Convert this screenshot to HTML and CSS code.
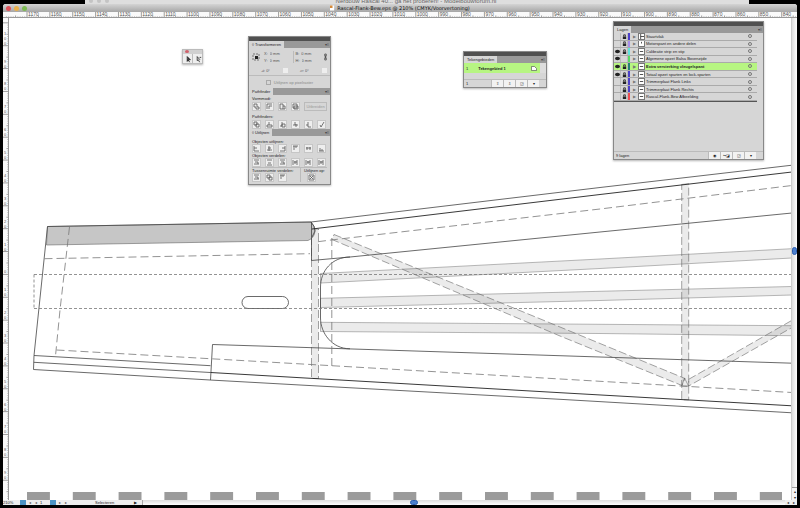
FILE: index.html
```html
<!DOCTYPE html>
<html lang="nl">
<head>
<meta charset="utf-8">
<title>Rascal-Flank-Bew.eps</title>
<link rel="stylesheet" href="styles.css">
</head>
<body>
<div class="browser"><i></i><i></i><i></i><span>Nerdouw Rascal 40... ga het proberen! - Modelbouwforum.nl</span></div>
<main class="window">
  <header class="titlebar">
    <div class="lights"><button class="red" aria-label="Sluit"></button><button class="amber" aria-label="Minimaliseer"></button><button class="green" aria-label="Vergroot"></button></div>
    <h1><svg viewBox="0 0 6 6"><path d="M0 0h5v6H0z" fill="#fff"/><path d="M0 0h3v3H0z" fill="#d58a3a"/></svg>Rascal-Flank-Bew.eps @ 210% (CMYK/Voorvertoning)</h1>
  </header>
  <svg class="ruler-top" id="rulerTop" viewBox="3 12 794 6" preserveAspectRatio="xMinYMin slice"></svg>
  <div class="workspace">
    <svg class="ruler-left" id="rulerLeft" viewBox="3 18 6 482" preserveAspectRatio="xMinYMin slice"></svg>
    <svg class="canvas" viewBox="9 18 782 482" preserveAspectRatio="xMinYMin slice">
      <g class="spar">
        <path d="M320.5 273.5L600 259 792 248.7V258L600 268.5 320.5 283z"/>
        <path d="M320.5 298.3L600 291.3 792 286.5V295L600 300.5 320.5 307.5z"/>
        <path d="M320.5 322.3L600 324.3 792 325.7V335.7L600 333.5 320.5 331.5z"/>
      </g>
      <g class="spar dashed">
        <path d="M311.5 229H318.5V378.5H311.5z"/>
        <path d="M681.7 184.5L688.7 183.7V399.8H681.7z"/>
        <path d="M334 234.5L560 327 685 378.5 682 385.5 560 336 332 239.5z"/>
        <path d="M688.7 379.3L792 320.3V327.5L688.7 386z"/>
      </g>
      <path class="hair" d="M681.7 386L684.5 378 688.5 386z"/>
      <path class="block" d="M47.5 226.5L311 222Q315 226 315 231 314.5 238 308 240.5L46.5 245z"/>
      <g class="line">
        <path d="M311 222Q315 226 315 231L312 237M311.5 222V260.5"/>
        <path d="M47.5 226.5L34 355.5 33.5 369.5 210 380 300 385 560 399.3 792 412.8"/>
        <path d="M34 355.5L210.5 365.7M33.8 362.3L210.5 372.5M210.5 380L212.5 344.5 300 347.3 600 357 792 363.2"/>
        <path d="M47.5 226.5L311 222 600 187.5 792 165.2"/>
        <path class="dark" d="M312 229L600 194.5 792 172M210.5 372.5L312 378.4 560 392.7 792 405.8"/>
        <path d="M311.5 260.5L350 257 600 232 792 213"/>
        <path d="M350 257C332 257 320.5 271 320.5 287V318C320.5 333 332 348.8 350 348.8"/>
        <rect x="242" y="296.5" width="46.5" height="12" rx="6"/>
      </g>
      <path class="dash" d="M44.5 258.7L310 253.7M318 241.7L331 240 600 209 792 185.5M69.5 227L60 310 55.5 356M56.5 350L210 358.7 311 364.5 600 381.3 792 392.5M331.8 238V366"/>
      <path class="dots" d="M34 274.5H792M34 308.5H792M34 274.5V308.5"/>
      <path class="blocks" d="M27 496H782"/>
    </svg>
    <div class="vscroll"><span class="track"></span><span class="thumb"></span><button aria-label="Omhoog">▴</button><button aria-label="Omlaag">▾</button></div>
  </div>
  <footer class="status">
    <span class="zoom">210%</span>
    <span class="nav"><b></b><button aria-label="Eerste">◂</button><button aria-label="Vorige">◂</button><span>1</span></span>
    <span class="nav next"><b></b><button aria-label="Volgende">▸</button><button aria-label="Laatste">▸</button></span>
    <span class="tool">Selecteren</span><span class="play">▶</span>
    <span class="hscroll"><span class="thumb"></span></span>
    <button aria-label="Links">◂</button><button aria-label="Rechts">▸</button>
  </footer>
</main>

<section class="palette tools">
  <div class="mini"><i></i></div>
  <div class="pair"><button aria-label="Selectie"><svg viewBox="0 0 10 10"><path d="M4 2v6l1.500-1.500L7 9M4 2l4 4H5" fill="#222" stroke="#222"/></svg></button><button aria-label="Direct selecteren"><svg viewBox="0 0 10 10"><path d="M4 2v5l1.500-1L7 9M4 2l3.500 4M7 3h2" fill="none" stroke="#222"/></svg></button></div>
</section>

<section class="palette transform">
  <div class="bar"></div>
  <div class="tabs"><button>◊ Transformeren</button></div>
  <div class="body fields">
    <svg class="anchor" viewBox="0 0 8 8"><path d="M1 1h6v6H1z" fill="none" stroke="#777" stroke-dasharray="2 1"/><path d="M3 3h3v3H3z" fill="#222"/></svg>
    <div class="col"><label>X: <input value="0 mm"></label><label>Y: <input value="0 mm"></label></div>
    <div class="col second"><label>B: <input value="0 mm"></label><label>H: <input value="0 mm"></label></div>
    <svg class="chain" viewBox="0 0 4 8"><path d="M1 0h2v3H1zM1 5h2v3H1zM2 2v4" fill="none" stroke="#444"/></svg>
  </div>
  <div class="body angles"><label>⊿: <select><option>0°</option></select></label><label>▱: <select><option>0°</option></select></label></div>
  <div class="body check"><label><input type="checkbox"> Uitlijnen op pixelraster</label></div>
  <div class="tabs"><button>Pathfinder</button></div>
  <div class="body group path">
    <p>Vormmodi:</p>
    <div class="icons" data-icons="0 1 2 3"><button class="expand">Uitbreiden</button></div>
    <p>Pathfinders:</p>
    <div class="icons" data-icons="4 5 6 7 8 9"></div>
  </div>
  <div class="tabs"><button>◊ Uitlijnen</button></div>
  <div class="body group align">
    <p>Objecten uitlijnen:</p>
    <div class="icons" data-icons="10 11 12 13 14 15"></div>
    <p>Objecten verdelen:</p>
    <div class="icons" data-icons="16 17 16 18 18 18"></div>
    <div class="split"><div><p>Tussenruimte verdelen:</p><div class="icons" data-icons="16 4 13"></div></div><div class="to"><p>Uitlijnen op:</p><div class="icons" data-icons="19"></div></div></div>
  </div>
</section>

<section class="palette artboards">
  <div class="bar"></div>
  <div class="tabs"><button>Tekengebieden</button></div>
  <div class="board"><span>1</span><b>Tekengebied 1</b><svg viewBox="0 0 6 5"><path d="M.5.5h3l2 2v2h-5z" fill="#fff" stroke="#444" stroke-width=".6"/></svg></div>
  <div class="gap"></div>
  <div class="foot"><span>1</span><button>⇧</button><button>⇩</button><button>◲</button><button>▾</button></div>
</section>

<section class="palette layers">
  <div class="bar"></div>
  <div class="tabs"><button>Lagen</button></div>
  <ul id="layers"></ul>
  <div class="rest"></div>
  <div class="foot"><span>9 lagen</span><button>◉</button><button>↪◪</button><button>◲</button><button>▾</button></div>
</section>
<script src="app.js"></script>
</body>
</html>
```
FILE: styles.css
```css
* { box-sizing: border-box; }
body { margin: 0; height: 100vh; background: #000; overflow: hidden; display: flex; flex-direction: column; font: 4px/5px "Liberation Sans", sans-serif; color: #222; position: relative; }
button, input, select { font: inherit; color: inherit; margin: 0; padding: 0; border: 0; background: none; border-radius: 0; appearance: none; }
button { display: flex; align-items: center; justify-content: center; }
p, h1, ul { margin: 0; padding: 0; font-weight: normal; list-style: none; }
svg { display: block; }

.browser { height: 4px; flex: none; margin: 0 51px 0 85px; background: #dedede; display: flex; gap: 4px; padding-left: 4px; overflow: hidden; position: relative; }
.browser i { width: 4px; height: 4px; margin-top: -1px; border-radius: 50%; background: #c4c4c4; }
.browser span { flex: 1; text-align: center; margin: -2px 30px 0 0; font: 6px/6px "Liberation Sans", sans-serif; color: #666; }
.window { flex: 1; min-height: 0; margin: 0 3px 3px; background: #fff; border-radius: 3px 3px 0 0; overflow: hidden; display: flex; flex-direction: column; }
.titlebar { height: 8px; flex: none; background: linear-gradient(#d4d4d4, #a6a6a6); display: flex; align-items: center; padding-left: 3px; }
.lights { display: flex; gap: 3px; }
.lights button { width: 5px; height: 5px; border-radius: 50%; }
.red { background: #e0525a; }
.amber { background: #e9b04a; }
.green { background: #7cbb52; }
.titlebar h1 { flex: 1; display: flex; justify-content: center; gap: 2px; font: 5px/6px "DejaVu Sans", sans-serif; color: #111; padding-right: 24px; }
.titlebar h1 svg { width: 5px; height: 6px; }
.ruler-top { width: 100%; height: 6px; flex: none; background: #fafafa; border-bottom: 1px solid #999; }
.workspace { flex: 1; min-height: 0; display: flex; }
.ruler-left { width: 6px; height: 100%; flex: none; background: #fafafa; border-right: 1px solid #999; }
.tick { stroke: #777; stroke-width: 0.7; fill: none; }
.num { font: 5px "Liberation Sans", sans-serif; fill: #555; }
.side { font-size: 4px; }
.canvas { flex: 1; min-width: 0; height: 100%; }
.spar path { fill: rgba(0, 0, 0, 0.08); stroke: #888; stroke-width: 0.6; }
.dashed path { stroke: #666; stroke-dasharray: 8 3; }
.hair { fill: none; stroke: #555; stroke-width: 0.5; }
.block { fill: #c6c6c6; stroke: #666; stroke-width: 0.6; }
.line { fill: none; stroke: #444; stroke-width: 0.8; }
.dark { stroke: #222; stroke-width: 0.9; }
.dash { fill: none; stroke: #777; stroke-width: 0.8; stroke-dasharray: 8 4; }
.dots { fill: none; stroke: #777; stroke-width: 0.8; stroke-dasharray: 3 2; }
.blocks { stroke: #9b9b9b; stroke-width: 8; stroke-dasharray: 22.9 22.9; }
.vscroll { width: 6px; flex: none; background: #f4f4f4; border-left: 1px solid #ccc; display: flex; flex-direction: column; position: relative; }
.track { flex: 1; background: linear-gradient(90deg, #ddd, #fff); border-bottom: 1px solid #999; }
.vscroll button { height: 6px; }
.thumb { background: #4c80cf; border: 1px solid #2b5eb0; border-radius: 3px; }
.vscroll .thumb { position: absolute; left: 0; top: 47.5%; width: 5px; height: 8px; }
.status { height: 5px; flex: none; background: #eee; display: flex; align-items: center; }
.zoom { width: 17px; }
.nav { display: flex; align-items: center; width: 30px; gap: 2px; }
.nav b { width: 6px; height: 5px; background: #4b93c4; }
.nav button { width: 4px; color: #555; }
.tool { margin-left: 15px; }
.play { margin-left: 20px; }
.hscroll { flex: 1; height: 5px; margin-left: 5px; border-left: 1px solid #aaa; background: linear-gradient(#ddd, #fff); position: relative; }
.hscroll .thumb { position: absolute; left: 41.5%; top: 0; width: 8px; height: 5px; }
.status > button { width: 6px; }

.palette { position: absolute; background: #d6d6d6; border: 1px solid #888; box-shadow: 0 1px 2px rgba(0, 0, 0, 0.3); display: flex; flex-direction: column; }
.bar { height: 4px; flex: none; background: #505050; }
.tabs { height: 7px; flex: none; background: #999; display: flex; position: relative; }
.tabs::after { content: "▾≡"; position: absolute; right: 1px; top: 1px; color: #444; }
.tabs button { background: #d6d6d6; padding: 0 3px; }
.tools { left: 182px; top: 49px; width: 21px; height: 15px; border-color: #bbb; background: #eee; }
.mini { height: 4px; background: #d0d0d0; padding: 0 2px; }
.mini i { display: block; width: 4px; height: 3px; border-radius: 50%; background: #d0606a; }
.pair { flex: 1; display: grid; grid-template-columns: 1fr 1fr; gap: 1px; background: #bbb; }
.pair button { background: #eee; }
.pair svg { width: 8px; height: 8px; }

.transform { left: 248px; top: 36px; width: 83px; }
.body { padding: 0 3px; }
.fields { height: 16px; display: flex; align-items: center; gap: 4px; margin-top: 1px; color: #555; }
.anchor { width: 8px; height: 8px; }
.col { flex: 1; display: grid; gap: 2px; }
.col label { display: flex; gap: 2px; }
.col input { width: 14px; height: 5px; }
.second { border-left: 1px solid #bbb; padding-left: 2px; }
.chain { width: 3px; height: 8px; }
.angles { height: 11px; display: flex; justify-content: space-between; align-items: center; border-bottom: 1px solid #bbb; padding: 0 3px 0 12px; color: #555; }
.angles label { display: flex; gap: 1px; }
.angles select { width: 22px; height: 5px; background: linear-gradient(#eee, #eee) right / 5px 5px no-repeat; }
.check { height: 12px; display: flex; align-items: center; justify-content: center; color: #888; }
.check label { display: flex; gap: 3px; }
.check input { width: 5px; height: 5px; border: 1px solid #aaa; }
.group { display: flex; flex-direction: column; }
.group p { height: 5px; white-space: nowrap; }
.path { height: 34px; padding-top: 1px; gap: 1px; }
.path .icons { margin-bottom: 2px; }
.align { height: 48px; padding-top: 3px; }
.icons { display: flex; gap: 4px; height: 9px; }
.icons button { width: 9px; height: 9px; background: #eee; border: 1px solid #c6c6c6; }
.icons svg { width: 7px; height: 7px; fill: none; stroke: #555; stroke-width: 0.8; }
.icons .expand { width: 27px; order: 1; background: #d6d6d6; color: #999; border-color: #bbb; }
.split { display: flex; justify-content: space-between; border-top: 1px solid #bbb; }
.to { border-left: 1px solid #bbb; padding-left: 3px; width: 27px; }
.to .icons { padding-left: 3px; }

.artboards { left: 463px; top: 51px; width: 84px; height: 37px; }
.board { height: 10px; background: #b7f582; display: flex; align-items: center; padding: 0 3px 0 2px; gap: 10px; border-right: 6px solid #ddd; }
.board b { flex: 1; }
.board svg { width: 6px; height: 5px; }
.gap { flex: 1; }
.foot { height: 8px; flex: none; border-top: 1px solid #bbb; display: flex; align-items: center; padding: 0 7px 0 2px; }
.foot span { flex: 1; }
.foot button { width: 12px; height: 7px; background: #f2f2f2; border-left: 1px solid #bbb; }

.layers { left: 613px; top: 21px; width: 151px; height: 139px; }
.layers ul { height: 69px; flex: none; display: grid; grid-template-rows: repeat(9, 1fr); margin-right: 6px; border-bottom: 1px solid #555; }
.layers li { display: flex; align-items: center; border-bottom: 1px solid #aaa; min-height: 0; overflow: hidden; }
.layers li button { width: 7px; height: 7px; border-right: 1px solid #bbb; flex: none; }
.layers li button svg { width: 5px; height: 5px; }
.swatch { width: 2px; height: 7px; }
.tri { width: 7px; text-align: center; color: #777; margin-left: 1px; }
.thumbnail { width: 7px; height: 7px; background: #fff; border: 1px solid #777; }
.name { flex: 1; padding-left: 1px; white-space: nowrap; }
.ring { width: 4px; height: 4px; border: 1px solid #777; border-radius: 50%; margin-right: 5px; }
.layers .active { background: #b7f582; font-weight: bold; }
.rest { flex: 1; }
```
FILE: app.js
```js
const ns = 'http://www.w3.org/2000/svg';
function add(parent, name, attrs, text) {
  const el = document.createElementNS(ns, name);
  for (const key in attrs) el.setAttribute(key, attrs[key]);
  if (text !== undefined) el.textContent = text;
  parent.append(el);
}

// One major division is ten units; the minor ticks split it in ten.
const step = 22.87;
const rulerTop = document.getElementById('rulerTop');
let d = '';
for (let i = -1; i < 34; i++) {
  const x = 27 + i * step;
  if (i >= 0) {
    d += `M${x} 12V18`;
    add(rulerTop, 'text', { class: 'num', x: x + 1, y: 16 }, 1170 - i * 10);
  }
  for (let k = 1; k < 10; k++) d += `M${x + k * step / 10} ${k === 5 ? 15.5 : 16.5}V18`;
}
add(rulerTop, 'path', { class: 'tick', d });

// Labels beside the vertical ruler are stacked, one digit above the other.
const rulerLeft = document.getElementById('rulerLeft');
d = '';
for (let i = -11; i < 10; i++) {
  const y = 274.4 + i * step;
  d += `M3 ${y}H9`;
  if (i > -11) {
    [...String(Math.abs(i) * 10)].reverse().forEach((c, n) => add(rulerLeft, 'text', { class: 'num side', x: 4, y: y - 1 - n * 5 }, c));
  }
  for (let k = 1; k < 10; k++) d += `M${k === 5 ? 6.5 : 7.5} ${y + k * step / 10}H9`;
}
add(rulerLeft, 'path', { class: 'tick', d });

const icons = [
  'M1 1h3v3h2v2H3V4H1z', 'M1 6V1h5M3 6V3h3', 'M1 1h3v5H1zM4 3h2v3H4', 'M1 1h4v4H1zM2 3h4v3H2z',
  'M1 1h3v3H1zM3 3h3v3H3z', 'M3 1v3H1v2h5V4H3', 'M3 1v4H1M3 3h3v3H3z', 'M3 1v3H1M3 4h3M4 3v3', 'M3 1v5h3M1 4h2', 'M2 4l1 2 3-5',
  'M1 1v5h5M1 3h3', 'M3 1v5M2 3h3M1 5h5', 'M6 1v5H1M3 3h3', 'M1 1h5M2 1v4M4 1v2', 'M1 3h5M2 2v3M5 2v3', 'M1 6h5M2 3v3M4 4v2',
  'M1 1h5M1 5h5M2 3h3v2', 'M1 1h5M1 6h5M2 4h3', 'M1 1v5M5 1v5M3 2v3M2 3h3', 'M1 1h5v5H1zM2 2l3 3M5 2L2 5'
];
document.querySelectorAll('[data-icons]').forEach(row => {
  row.dataset.icons.split(' ').forEach(n => {
    row.insertAdjacentHTML('beforeend', `<button aria-label="Bewerking"><svg viewBox="0 0 7 7"><path d="${icons[n]}"/></svg></button>`);
  });
});

const eye = '<svg viewBox="0 0 6 6"><ellipse cx="3" cy="3" rx="3" ry="2" fill="#222"/></svg>';
const lock = '<svg viewBox="0 0 6 6"><path d="M1 3h4v3H1z" fill="#222"/><path d="M2 3V1h2v2" fill="none" stroke="#222"/></svg>';
const layers = [
  ['Staartvlak', '#4b3fc9', 0, 1], ['Motorspant en andere delen', '#a58bea', 0, 1],
  ['Calibratie strip en stip', '#5fe3dc', 1, 1], ['Algemene opzet Balsa Bovenzijde', '#57dc62', 1, 0],
  ['Extra versterking vleugelspant', '#238272', 1, 1], ['Totaal opzet sparten en lock-sparten', '#4b3fc9', 1, 1],
  ['Trimmerplaat Flank Links', '#4b3fc9', 0, 1], ['Trimmerplaat Flank Rechts', '#4b3fc9', 0, 1],
  ['Rascal-Flank-Bew Afbeelding', '#ef4c50', 0, 1]
];
document.getElementById('layers').innerHTML = layers.map(([name, color, seen, locked], i) =>
  `<li class="${i === 4 ? 'active' : ''}"><button aria-label="Zichtbaar">${seen ? eye : ''}</button><button aria-label="Vergrendeld">${locked ? lock : ''}</button><span class="swatch" style="background:${color}"></span><span class="tri">▶</span><svg class="thumbnail" viewBox="0 0 6 6"><path d="${i === 0 ? 'M2 0v6M2 3h4' : i === 1 ? 'M3 1v2' : 'M1 3h4'}" stroke="#333"/></svg><span class="name">${name}</span><span class="ring"></span></li>`).join('');
```
